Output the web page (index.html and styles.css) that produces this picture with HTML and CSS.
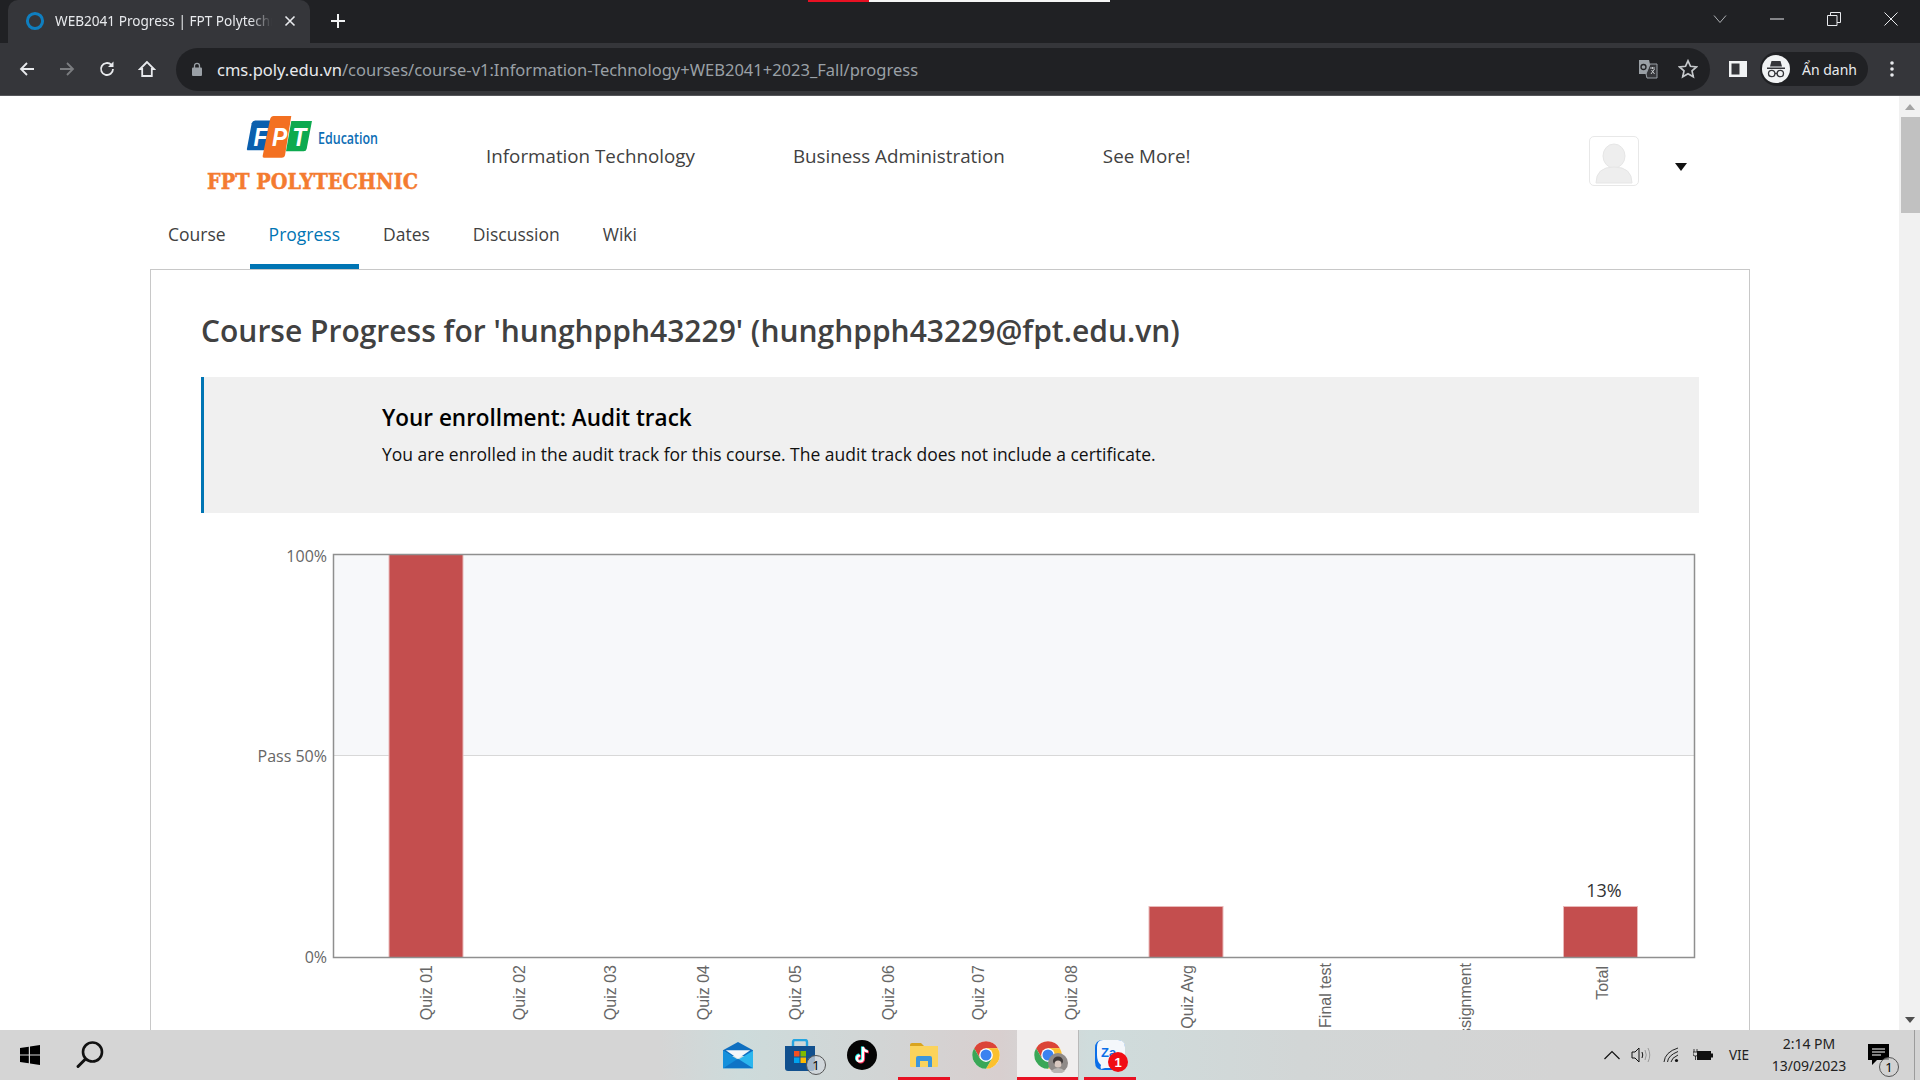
FILE: index.html
```html
<!DOCTYPE html>
<html lang="en">
<head>
    <meta charset="UTF-8">
    <meta name="viewport" content="width=device-width, initial-scale=1.0">
    <title>WEB2041 Progress | FPT Polytechnic</title>
    <link rel="stylesheet" href="styles.css">
</head>
<body>
    <svg class="defs" width="0" height="0" aria-hidden="true">
        <symbol id="chrome-logo" viewBox="0 0 48 48">
            <circle cx="24" cy="24" r="22" fill="#fff"/>
            <path fill="#db4437" d="M4.95 13A22 22 0 0 1 43.05 13H24L14.47 29.5Z"/>
            <path fill="#fbc02d" transform="rotate(120 24 24)" d="M4.95 13A22 22 0 0 1 43.05 13H24L14.47 29.5Z"/>
            <path fill="#3aa757" transform="rotate(240 24 24)" d="M4.95 13A22 22 0 0 1 43.05 13H24L14.47 29.5Z"/>
            <circle cx="24" cy="24" r="11" fill="#fff"/>
            <circle cx="24" cy="24" r="8.8" fill="#3b82f0"/>
        </symbol>
    </svg>

    <div class="screen">
        <header class="browser">
            <div class="tabstrip">
                <div class="tab">
                    <svg class="favicon" width="20" height="20" viewBox="0 0 20 20"><circle cx="10" cy="10" r="7.6" fill="none" stroke="#0f7fc0" stroke-width="3"/></svg>
                    <span class="tab-title">WEB2041 Progress | FPT Polytechnic</span>
                    <svg class="tab-close" width="12" height="12" viewBox="0 0 12 12"><path d="M1.5 1.5l9 9M10.5 1.5l-9 9" stroke="#e8eaed" stroke-width="1.6"/></svg>
                </div>
                <svg class="new-tab" width="16" height="16" viewBox="0 0 16 16"><path d="M8 1v14M1 8h14" stroke="#f1f3f4" stroke-width="2"/></svg>
                <div class="capture-strip"><span class="capture-red"></span><span class="capture-white"></span></div>
                <div class="window-controls">
                    <svg width="14" height="10" viewBox="0 0 14 10"><path d="M1 1.5l6 7 6-7" fill="none" stroke="#aeb1b5" stroke-width="1"/></svg>
                    <svg width="14" height="2" viewBox="0 0 14 2"><path d="M0 1h14" stroke="#e8eaed" stroke-width="1"/></svg>
                    <svg width="14" height="14" viewBox="0 0 14 14"><path d="M.5 3.5h9.500v10h-9.500zM3.500 3.500v-3h10v10h-3.500" fill="none" stroke="#e8eaed" stroke-width="1"/></svg>
                    <svg width="14" height="14" viewBox="0 0 14 14"><path d="M.5.5l13 13M13.500.5l-13 13" stroke="#e8eaed" stroke-width="1"/></svg>
                </div>
            </div>
            <div class="toolbar">
                <div class="toolbar-nav">
                    <svg width="18" height="18" viewBox="-1 -1 18 18"><path d="M15 8H2M8 2L2 8l6 6" fill="none" stroke="#e8eaed" stroke-width="1.800"/></svg>
                    <svg width="18" height="18" viewBox="-1 -1 18 18"><path d="M1 8h13M8 2l6 6-6 6" fill="none" stroke="#7b7d80" stroke-width="1.800"/></svg>
                    <svg width="18" height="18" viewBox="0 0 18 18"><path d="M15 9a6 6 0 1 1-1.800-4.300" fill="none" stroke="#e8eaed" stroke-width="1.800"/><path d="M15.500 1.500v5.500h-5.500z" fill="#e8eaed"/></svg>
                    <svg width="18" height="18" viewBox="0 0 18 18"><path d="M9 2L2 9h2.200v7h9.600V9H16z" fill="none" stroke="#e8eaed" stroke-width="1.800"/></svg>
                </div>
                <div class="omnibox">
                    <svg class="lock" width="10" height="14" viewBox="0 0 10 14"><path d="M2.500 6V3.800a2.500 2.500 0 0 1 5 0V6" fill="none" stroke="#9aa0a6" stroke-width="1.300"/><rect y="5.500" width="10" height="8.500" rx="1" fill="#9aa0a6"/></svg>
                    <div class="url"><span class="url-host">cms.poly.edu.vn</span>/courses/course-v1:Information-Technology+WEB2041+2023_Fall/progress</div>
                    <svg class="omni-icon" width="20" height="20" viewBox="0 0 20 20"><path d="M1 1h10l1 4h7v14H9l-1-4H1z" fill="#9aa0a6"/><path d="M8 15l1 4h10V5h-7z" fill="#35363a" stroke="#9aa0a6"/><circle cx="5.500" cy="8" r="2.500" fill="none" stroke="#202124" stroke-width="1.300"/><path d="M12 9h5M14.500 8v2M13 15l3.500-5M13.500 11l3 4" stroke="#c5c8cb" stroke-width="1" fill="none"/></svg>
                    <svg class="omni-icon" width="20" height="20" viewBox="0 0 20 20"><path d="M10 1.800l2.500 5.500 6 .6-4.500 4 1.300 5.900L10 14.800l-5.300 3 1.300-5.900-4.500-4 6-.6z" fill="none" stroke="#c5c8cb" stroke-width="1.700"/></svg>
                </div>
                <svg class="side-panel" width="18" height="18" viewBox="0 0 18 18"><path fill-rule="evenodd" d="M0 1h18v16H0zM2.500 3.500v11h8v-11z" fill="#f1f3f4"/></svg>
                <div class="profile">
                    <span class="profile-pic">
                        <svg width="28" height="28" viewBox="0 0 28 28"><circle cx="14" cy="14" r="14" fill="#f1f3f4"/><path d="M9.500 6h9l1.500 5.500h-12zM5 12.500h18v1.400H5z" fill="#35363a"/><circle cx="9.700" cy="18.500" r="3.200" fill="none" stroke="#35363a" stroke-width="1.300"/><circle cx="18.300" cy="18.500" r="3.200" fill="none" stroke="#35363a" stroke-width="1.300"/><path d="M12.900 18.500h2.200" stroke="#35363a" stroke-width="1.300"/></svg>
                    </span>
                    <span class="profile-name">Ẩn danh</span>
                </div>
                <svg class="kebab" width="6" height="18" viewBox="0 0 6 18"><circle cx="3" cy="3" r="1.800" fill="#e8eaed"/><circle cx="3" cy="9" r="1.800" fill="#e8eaed"/><circle cx="3" cy="15" r="1.800" fill="#e8eaed"/></svg>
            </div>
        </header>

        <div class="viewport">
            <div class="page">
                <div class="site-header">
                    <a class="logo">
                        <svg width="230" height="96" viewBox="0 0 230 96">
                            <g transform="translate(42 9.800) scale(.88 1.02)">
                                <path d="M11 17q1-2.500 4-2.500h23l-6 29H6l-.5-1z" fill="#0a5fae"/>
                                <path d="M32 13q1-3 4-3h20l-7 38q-.5 3-4 3H25q-2 0-1.500-2z" fill="#f37021"/>
                                <path d="M56 15h23.500l-6 27q-.5 2.500-3.500 2.500H50z" fill="#0daa4f"/>
                                <text class="logo-fpt" x="13" y="39">F</text>
                                <text class="logo-fpt" x="34" y="39">P</text>
                                <text class="logo-fpt" x="57" y="39">T</text>
                            </g>
                            <text class="logo-edu" x="118" y="48" textLength="60" lengthAdjust="spacingAndGlyphs">Education</text>
                            <text class="logo-school" x="7" y="93" textLength="211" lengthAdjust="spacingAndGlyphs">FPT POLYTECHNIC</text>
                        </svg>
                    </a>
                    <nav class="site-nav">
                        <a>Information Technology</a>
                        <a>Business Administration</a>
                        <a>See More!</a>
                    </nav>
                    <div class="user-menu">
                        <div class="avatar">
                            <svg width="48" height="48" viewBox="0 0 48 48"><ellipse cx="24" cy="19" rx="11" ry="12" fill="#eeeeee" stroke="#e6e6e6"/><path d="M6 46q0-16 18-16t18 16z" fill="#eeeeee" stroke="#e6e6e6"/></svg>
                        </div>
                        <span class="caret"></span>
                    </div>
                </div>

                <nav class="course-tabs">
                    <a class="course-tab">Course</a>
                    <a class="course-tab active">Progress</a>
                    <a class="course-tab">Dates</a>
                    <a class="course-tab">Discussion</a>
                    <a class="course-tab">Wiki</a>
                </nav>

                <section class="card">
                    <h1>Course Progress for 'hunghpph43229' (hunghpph43229@fpt.edu.vn)</h1>
                    <div class="enrollment">
                        <h2>Your enrollment: Audit track</h2>
                        <p>You are enrolled in the audit track for this course. The audit track does not include a certificate.</p>
                    </div>
                    <svg class="chart" width="1498" height="500" viewBox="0 0 1498 500">
                        <rect class="zone" x="132" y="14" width="1361" height="201"/>
                        <path class="pass-line" d="M132 215.500H1493"/>
                        <rect class="bar" x="188" y="14.500" width="74" height="403"/>
                        <rect class="bar" x="948" y="366.500" width="74" height="51"/>
                        <rect class="bar" x="1362.500" y="366.500" width="74" height="51"/>
                        <path class="plot-border" d="M132.500 14.500H1493.500V417.500H132.500Z"/>
                        <text class="y-label" x="126" y="22">100%</text>
                        <text class="y-label" x="126" y="222">Pass 50%</text>
                        <text class="y-label" x="126" y="423">0%</text>
                        <text class="bar-value" x="1403" y="357">13%</text>
                        <text class="x-label" transform="translate(231 425) rotate(-90)">Quiz 01</text>
                        <text class="x-label" transform="translate(324 425) rotate(-90)">Quiz 02</text>
                        <text class="x-label" transform="translate(415 425) rotate(-90)">Quiz 03</text>
                        <text class="x-label" transform="translate(508 425) rotate(-90)">Quiz 04</text>
                        <text class="x-label" transform="translate(600 425) rotate(-90)">Quiz 05</text>
                        <text class="x-label" transform="translate(693 425) rotate(-90)">Quiz 06</text>
                        <text class="x-label" transform="translate(783 425) rotate(-90)">Quiz 07</text>
                        <text class="x-label" transform="translate(876 425) rotate(-90)">Quiz 08</text>
                        <text class="x-label" transform="translate(992 425) rotate(-90)">Quiz Avg</text>
                        <text class="x-label" transform="translate(1130 423) rotate(-90)">Final test</text>
                        <text class="x-label" transform="translate(1270 423) rotate(-90)">Assignment</text>
                        <text class="x-label" transform="translate(1407 426) rotate(-90)">Total</text>
                    </svg>
                </section>
            </div>
            <div class="scrollbar">
                <span class="scroll-btn"><i class="arrow-up"></i></span>
                <span class="scroll-thumb"></span>
                <span class="scroll-track"></span>
                <span class="scroll-btn"><i class="arrow-down"></i></span>
            </div>
        </div>

        <footer class="taskbar">
            <div class="task-tile start">
                <svg width="20" height="20" viewBox="0 0 20 20"><path d="M0 3l8.800-1.300v7.700H0zM10 1.500L20 0v9.400H10zM0 10.600h8.800v7.700L0 17zM10 10.600h10V20l-10-1.500z" fill="#000"/></svg>
            </div>
            <div class="task-tile start">
                <svg width="30" height="30" viewBox="0 0 30 30"><circle cx="17.500" cy="12" r="9.500" fill="none" stroke="#111" stroke-width="2.600"/><path d="M10.500 19l-7.500 7.500" stroke="#111" stroke-width="3" stroke-linecap="round"/></svg>
            </div>
            <div class="task-apps">
                <div class="task-tile">
                    <svg width="30" height="28" viewBox="0 0 32 28"><path d="M16 0L32 9v6H0V9z" fill="#0f6fc0"/><path d="M3 9h26l-13 9z" fill="#f4f7fa"/><path d="M0 9.500L16 19 32 9.500V28H0z" fill="#2bb6ee"/><path d="M0 9.500L16 19 0 28z" fill="#1590dc"/><path d="M0 28l16-10 16 10z" fill="#0f74c6"/></svg>
                </div>
                <div class="task-tile">
                    <svg width="30" height="32" viewBox="0 0 30 32"><path d="M8 8V3q0-2 2-2h10q2 0 2 2v5" fill="none" stroke="#25a5e0" stroke-width="2.400"/><path d="M0 7h30v22q0 3-3 3H3q-3 0-3-3z" fill="#11508e"/><rect x="9" y="12" width="5.500" height="5.500" fill="#f25022"/><rect x="15.500" y="12" width="5.500" height="5.500" fill="#7fba00"/><rect x="9" y="18.500" width="5.500" height="5.500" fill="#00a4ef"/><rect x="15.500" y="18.500" width="5.500" height="5.500" fill="#ffb900"/></svg>
                    <span class="count-badge">1</span>
                </div>
                <div class="task-tile">
                    <svg width="30" height="30" viewBox="0 0 30 30"><circle cx="15" cy="15" r="15" fill="#050505"/><path d="M16 7v11.500a3 3 0 1 1-3-3M16 7q.5 4 5 4.500" fill="none" stroke="#25f4ee" stroke-width="2.600" transform="translate(-.8 -.6)"/><path d="M16 7v11.500a3 3 0 1 1-3-3M16 7q.5 4 5 4.500" fill="none" stroke="#fe2c55" stroke-width="2.600" transform="translate(.8 .6)"/><path d="M16 7v11.500a3 3 0 1 1-3-3M16 7q.5 4 5 4.500" fill="none" stroke="#fff" stroke-width="2.200"/></svg>
                </div>
                <div class="task-tile running">
                    <svg width="28" height="24" viewBox="0 0 28 24"><path d="M0 2q0-2 2-2h9l3 3h-14z" fill="#d9a41f"/><path d="M0 3h28v20q0 1-1 1H1q-1 0-1-1z" fill="#fbd35c"/><path d="M6 24V15q0-2 2-2h12q2 0 2 2v9h-4v-6h-8v6z" fill="#3c96dc"/></svg>
                </div>
                <div class="task-tile">
                    <svg width="30" height="30"><use href="#chrome-logo"/></svg>
                </div>
                <div class="task-tile running active">
                    <svg width="30" height="30"><use href="#chrome-logo"/></svg>
                    <svg class="profile-badge" width="20" height="20" viewBox="0 0 20 20"><circle cx="10" cy="10" r="10" fill="#8f8a88"/><ellipse cx="10" cy="8" rx="5" ry="4.500" fill="#3f3a3a"/><ellipse cx="10" cy="11" rx="3.500" ry="3.500" fill="#d9c8c0"/><path d="M3 18q7-6 14 0l-3 2H6z" fill="#b9b6b4"/></svg>
                </div>
                <div class="task-tile running">
                    <svg width="30" height="30" viewBox="0 0 30 30"><path d="M8 0h14q8 0 8 8v14q0 8-8 8H8q-8 0-8-8V8q0-8 8-8z" fill="#0b6fe8"/><path d="M8 0h15q7 0 7 7v15q0 6-7 6H10l-4 1q-1-2 0-4Q2 22 2 15V7Q2 0 8 0z" fill="#f4f7fb"/></svg>
                    <span class="zalo-text">Za</span>
                    <span class="alert-badge">1</span>
                </div>
            </div>
            <div class="tray">
                <div class="tray-item tray-chevron"><svg width="16" height="10" viewBox="0 0 16 10"><path d="M.5 9L8 1.500 15.500 9" fill="none" stroke="#111" stroke-width="1.200"/></svg></div>
                <div class="tray-item tray-volume"><svg width="20" height="16" viewBox="0 0 20 16"><path d="M1 5h3l4-4v14l-4-4H1z" fill="none" stroke="#111"/><path d="M11 5q1.500 3 0 6" fill="none" stroke="#111"/><path d="M14 3q2.500 5 0 10M17 1q3.500 7 0 14" fill="none" stroke="#999"/></svg></div>
                <div class="tray-item tray-wifi"><svg width="18" height="16" viewBox="0 0 18 16"><path d="M1 15Q2 5 15 1M4.500 15Q5 8.500 15 4.500M8 15q.5-4 7-7" fill="none" stroke="#222"/><circle cx="13.500" cy="13.500" r="1.600" fill="#111"/></svg></div>
                <div class="tray-item tray-battery"><svg width="20" height="14" viewBox="0 0 20 14"><path d="M1 1v3M4 1v3M0 4h5v2q0 2-2 2H2Q0 8 0 6zM2.500 8v4" stroke="#111" fill="none" stroke-width=".8"/><rect x="4" y="3" width="14" height="9" fill="#111"/><rect x="18" y="5.500" width="2" height="4" fill="#111"/></svg></div>
                <div class="tray-lang">VIE</div>
                <div class="tray-clock"><div>2:14 PM</div><div>13/09/2023</div></div>
                <div class="tray-notify">
                    <svg width="21" height="22" viewBox="0 0 21 22"><path d="M0 0h21v16H9l-5 5v-5H0z" fill="#000"/><path d="M4 5h13M4 8h13M4 11h9" stroke="#fff" stroke-width="1.100"/></svg>
                    <span class="count-badge">1</span>
                </div>
                <div class="show-desktop"></div>
            </div>
        </footer>
    </div>
</body>
</html>
```

FILE: styles.css
```css
* {
    box-sizing: border-box;
}
html, body {
    margin: 0;
    height: 100%;
    overflow: hidden;
}
body {
    font-family: "Open Sans", sans-serif;
    background-color: #ffffff;
    color: #414141;
}
.defs {
    position: absolute;
}
.screen {
    display: flex;
    flex-direction: column;
    height: 1080px;
}

/* browser */
.browser {
    flex: none;
    height: 96px;
    background-color: #35363a;
    border-bottom: 1px solid #55565a;
    font-family: "Noto Sans", sans-serif;
}
.tabstrip {
    position: relative;
    display: flex;
    align-items: center;
    height: 43px;
    background-color: #202124;
    padding-left: 8px;
}
.tab {
    display: flex;
    align-items: center;
    width: 302px;
    height: 43px;
    background-color: #35363a;
    border-radius: 10px 10px 0 0;
    padding: 0 14px 2px 17px;
}
.favicon {
    flex: none;
}
.tab-title {
    flex: 1;
    margin-left: 10px;
    color: #e8eaed;
    font-size: 13.600px;
    white-space: nowrap;
    overflow: hidden;
    -webkit-mask-image: linear-gradient(to right, #000 90%, transparent 100%);
    mask-image: linear-gradient(to right, #000 90%, transparent 100%);
}
.tab-close {
    flex: none;
    margin-left: 12px;
}
.new-tab {
    margin: 0 0 2px 20px;
}
.capture-strip {
    position: absolute;
    top: 0;
    left: 808px;
    display: flex;
    height: 2px;
}
.capture-red {
    width: 61px;
    background-color: #e81123;
}
.capture-white {
    width: 241px;
    background-color: #f5f5f5;
}
.window-controls {
    display: flex;
    align-items: center;
    gap: 43px;
    margin-left: auto;
    padding: 0 22px 6px 0;
}
.toolbar {
    display: flex;
    align-items: center;
    height: 52px;
    padding-left: 18px;
}
.toolbar-nav {
    display: flex;
    flex: none;
    align-items: center;
    gap: 22px;
    width: 158px;
}
.omnibox {
    display: flex;
    flex: none;
    align-items: center;
    width: 1534px;
    height: 43px;
    background-color: #202124;
    border-radius: 22px;
    padding: 0 12px 0 16px;
}
.lock {
    flex: none;
}
.url {
    flex: 1;
    margin-left: 15px;
    color: #9aa0a6;
    font-size: 16.500px;
    white-space: nowrap;
}
.url-host {
    color: #e8eaed;
}
.omni-icon {
    flex: none;
    margin-left: 20px;
}
.side-panel {
    flex: none;
    margin-left: 19px;
}
.profile {
    display: flex;
    flex: none;
    align-items: center;
    width: 108px;
    height: 34px;
    margin-left: 13px;
    background-color: #202124;
    border-radius: 17px;
    padding-left: 2px;
}
.profile-pic {
    display: flex;
}
.profile-name {
    margin-left: 12px;
    color: #e8eaed;
    font-size: 14px;
    white-space: nowrap;
}
.kebab {
    flex: none;
    margin-left: 21px;
}

/* page */
.viewport {
    flex: 1;
    display: flex;
    min-height: 0;
}
.page {
    flex: 1;
    min-width: 0;
    overflow: hidden;
}
.site-header {
    display: flex;
    height: 116px;
    padding: 0 212px 0 200px;
}
.logo {
    width: 230px;
    flex: none;
}
.logo svg {
    display: block;
    overflow: visible;
}
.logo-fpt {
    font-family: "Liberation Sans", sans-serif;
    font-size: 26px;
    font-weight: bold;
    font-style: italic;
    fill: #ffffff;
}
.logo-edu {
    font-family: "Open Sans", sans-serif;
    font-size: 16px;
    font-weight: 600;
    fill: #0d6eb5;
}
.logo-school {
    font-family: "DejaVu Serif", serif;
    font-size: 22px;
    font-weight: bold;
    fill: #f47b30;
    stroke: #f47b30;
    stroke-width: 0.5;
}
.site-nav {
    display: flex;
    gap: 98px;
    margin-left: 56px;
    padding-top: 48px;
    font-size: 18.800px;
    line-height: 24px;
    color: #414141;
}
.user-menu {
    display: flex;
    margin-left: auto;
    padding-top: 40px;
}
.avatar {
    width: 50px;
    height: 50px;
    border: 1px solid #e8e8e8;
    border-radius: 5px;
}
.avatar svg {
    display: block;
}
.caret {
    width: 0;
    height: 0;
    margin: 27px 0 0 36px;
    border-left: 6.5px solid transparent;
    border-right: 6.5px solid transparent;
    border-top: 8px solid #111111;
}
.course-tabs {
    display: flex;
    gap: 5px;
    height: 57px;
    padding-left: 149px;
}
.course-tab {
    position: relative;
    padding: 10px 19px 0;
    font-size: 17.500px;
    line-height: 24px;
    color: #414141;
}
.course-tab.active {
    color: #0075b4;
    border-bottom: 5px solid #0075b4;
}
.card {
    width: 1600px;
    height: 780px;
    margin-left: 150px;
    border: 1px solid #c8c8c8;
    border-bottom: none;
    padding: 40px 50px 0;
}
.card h1 {
    margin: 0;
    font-size: 30px;
    font-weight: 600;
    line-height: 42px;
    color: #414141;
}
.enrollment {
    height: 136px;
    margin-top: 25px;
    background-color: #f0f0f0;
    border-left: 3px solid #0075b4;
    padding: 25px 0 0 178px;
    color: #111111;
}
.enrollment h2 {
    margin: 0;
    font-size: 22.500px;
    font-weight: 600;
    line-height: 32px;
    color: #000000;
}
.enrollment p {
    margin: 7px 0 0;
    font-size: 17.500px;
    line-height: 26px;
}
.chart {
    display: block;
    margin-top: 27px;
}
.zone {
    fill: #f7f8fa;
}
.pass-line {
    stroke: #d8d8d8;
    fill: none;
}
.bar {
    fill: #c44e4e;
    stroke: #e9b9b9;
    stroke-width: 1;
}
.plot-border {
    fill: none;
    stroke: #8f8f8f;
    stroke-width: 1.500;
}
.y-label {
    font-size: 16px;
    fill: #666666;
    text-anchor: end;
}
.bar-value {
    font-size: 18px;
    fill: #333333;
    text-anchor: middle;
}
.x-label {
    font-family: "Liberation Sans", sans-serif;
    font-size: 16px;
    fill: #666666;
    text-anchor: end;
}

/* scrollbar */
.scrollbar {
    flex: none;
    display: flex;
    flex-direction: column;
    width: 21px;
    background-color: #f1f1f1;
}
.scroll-btn {
    display: flex;
    flex: none;
    align-items: center;
    justify-content: center;
    height: 21px;
}
.arrow-up, .arrow-down {
    width: 0;
    height: 0;
    border-left: 5px solid transparent;
    border-right: 5px solid transparent;
}
.arrow-up {
    border-bottom: 6px solid #a3a3a3;
}
.arrow-down {
    border-top: 6px solid #505050;
}
.scroll-thumb {
    flex: none;
    height: 96px;
    margin-left: 2px;
    background-color: #c1c1c1;
}
.scroll-track {
    flex: 1;
}

/* taskbar */
.taskbar {
    flex: none;
    display: flex;
    height: 50px;
    background: linear-gradient(to right, #d5d5d5 0, #d5d5d5 660px, #cddbdb 740px, #d2d5d5 880px, #d8cfcf 1000px, #cfdcdc 1090px, #d2d6d6 1300px, #d4d4d4 1560px);
    color: #111111;
}
.task-tile {
    position: relative;
    display: flex;
    flex: none;
    align-items: center;
    justify-content: center;
    width: 62px;
    height: 50px;
}
.task-tile.start {
    width: 60px;
}
.task-apps {
    display: flex;
    margin-left: 587px;
}
.task-tile.running::after {
    content: "";
    position: absolute;
    left: 5px;
    right: 5px;
    bottom: 0;
    height: 3px;
    background-color: #e81123;
}
.task-tile.active {
    background-color: #f0eeee;
    border-right: 1px solid #b9b9b9;
}
.task-tile.active::after {
    left: 0;
    right: 0;
}
.count-badge {
    position: absolute;
    right: 5px;
    bottom: 5px;
    display: flex;
    align-items: center;
    justify-content: center;
    width: 20px;
    height: 20px;
    border: 1px solid #555555;
    border-radius: 50%;
    background-color: rgba(210, 215, 220, 0.75);
    font-family: "Noto Sans", sans-serif;
    font-size: 13px;
    color: #000000;
}
.profile-badge {
    position: absolute;
    right: 10px;
    bottom: 7px;
}
.zalo-text {
    position: absolute;
    left: 22px;
    top: 15px;
    font-family: "Liberation Sans", sans-serif;
    font-size: 13px;
    font-weight: bold;
    color: #0b6fe8;
}
.alert-badge {
    position: absolute;
    right: 13px;
    bottom: 8px;
    display: flex;
    align-items: center;
    justify-content: center;
    width: 20px;
    height: 20px;
    border-radius: 50%;
    background-color: #f00d14;
    font-family: "Liberation Sans", sans-serif;
    font-size: 13px;
    font-weight: bold;
    color: #ffffff;
}
.tray {
    display: flex;
    align-items: center;
    height: 50px;
    margin-left: auto;
    font-family: "Noto Sans", sans-serif;
    color: #222222;
}
.tray-item {
    display: flex;
    align-items: center;
    justify-content: center;
}
.tray-chevron {
    width: 30px;
}
.tray-volume {
    width: 28px;
}
.tray-wifi {
    width: 34px;
}
.tray-battery {
    width: 28px;
}
.tray-lang {
    width: 44px;
    text-align: center;
    font-size: 13.500px;
}
.tray-clock {
    width: 96px;
    text-align: center;
    font-size: 14px;
    line-height: 22px;
}
.tray-notify {
    position: relative;
    display: flex;
    align-items: center;
    width: 57px;
    height: 50px;
    padding-left: 11px;
}
.tray-notify .count-badge {
    right: 15px;
    bottom: 3px;
    background-color: rgba(210, 210, 210, 0.7);
}
.show-desktop {
    width: 6px;
    height: 50px;
    border-left: 1px solid #9c9c9c;
}
```
